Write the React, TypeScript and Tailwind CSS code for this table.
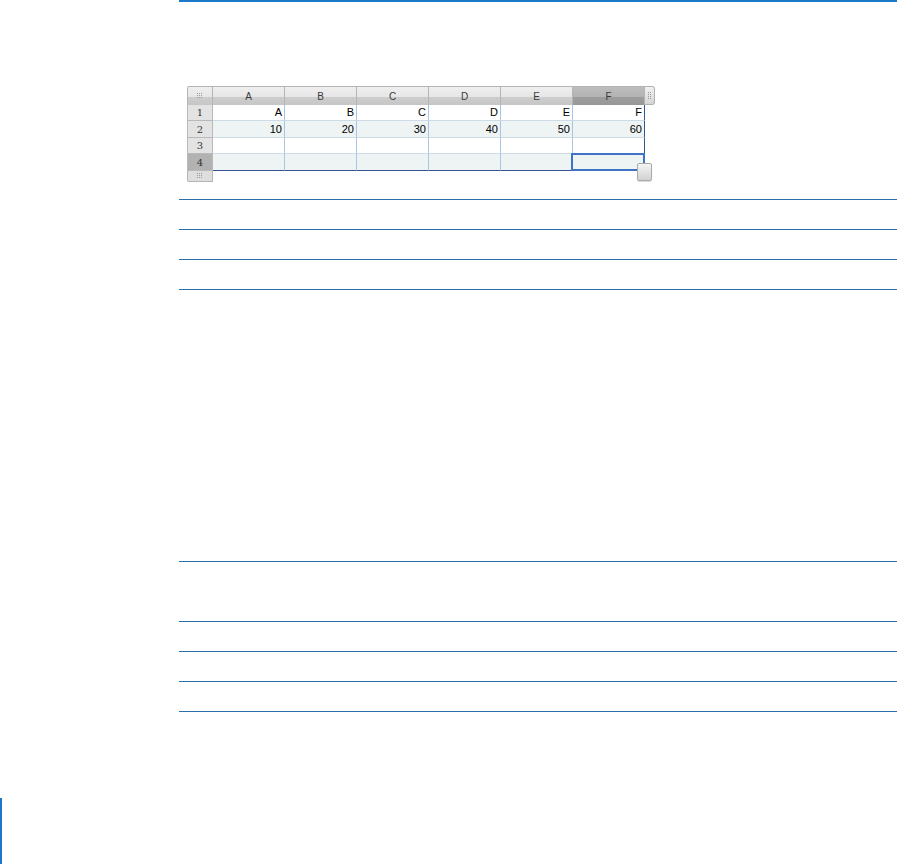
import React from "react";

const COLS = ["A", "B", "C", "D", "E", "F"];
const ROWS: { n: number; h: string; values: string[] }[] = [
  { n: 1, h: "h-[16px]", values: ["A", "B", "C", "D", "E", "F"] },
  { n: 2, h: "h-[17px]", values: ["10", "20", "30", "40", "50", "60"] },
  { n: 3, h: "h-[16px]", values: ["", "", "", "", "", ""] },
  { n: 4, h: "h-[17px]", values: ["", "", "", "", "", ""] },
];

function Grip({ vertical = false }: { vertical?: boolean }) {
  // tiny dotted grab handle
  const dots = [];
  const cols = vertical ? 2 : 3;
  const rows = vertical ? 4 : 3;
  for (let r = 0; r < rows; r++)
    for (let c = 0; c < cols; c++)
      dots.push(<rect key={`${r}-${c}`} x={c * 2} y={r * 2} width="1" height="1" fill="#9a9a9a" />);
  return (
    <svg width={cols * 2} height={rows * 2} viewBox={`0 0 ${cols * 2} ${rows * 2}`}>
      {dots}
    </svg>
  );
}

function Table() {
  return (
    <div className="relative w-[468px] font-['Liberation_Sans',Arial,sans-serif]">
      <div className="grid grid-cols-[26px_repeat(6,72px)_10px]">
        {/* header row */}
        <div className="h-[19px] flex items-center justify-center rounded-tl-[2px] border-l border-t border-r border-[#b5b5b5] bg-[linear-gradient(to_bottom,#efefef_0%,#e6e6e6_55%,#cdcdcd_58%,#c6c6c6_100%)]">
          <Grip />
        </div>
        {COLS.map((c) => (
          <div
            key={c}
            className={`h-[19px] flex items-center justify-center border-t border-r border-[#b5b5b5] text-[10px] text-[#3a3a3a] ${
              c === "F"
                ? "bg-[linear-gradient(to_bottom,#bdbdbd_0%,#b3b3b3_55%,#9d9d9d_58%,#979797_100%)]"
                : "bg-[linear-gradient(to_bottom,#efefef_0%,#e6e6e6_55%,#cdcdcd_58%,#c6c6c6_100%)]"
            }`}
          >
            {c}
          </div>
        ))}
        <div className="h-[19px] flex items-center justify-center rounded-r-[3px] border border-l-0 border-[#b0b0b0] bg-[linear-gradient(to_bottom,#f2f2f2,#d6d6d6)]">
          <Grip vertical />
        </div>

        {ROWS.map((row, ri) => (
          <React.Fragment key={row.n}>
            <div
              className={`${row.h} flex items-center justify-center border-l border-r border-b border-[#b9b9b9] text-[10px] text-[#333] font-['DejaVu_Serif',serif] ${
                row.n === 4 ? "bg-[#b2b2b2]" : "bg-[#e3e3e3]"
              }`}
            >
              {row.n}
            </div>
            {row.values.map((v, ci) => {
              const lastCol = ci === 5;
              const lastRow = ri === ROWS.length - 1;
              return (
                <div
                  key={ci}
                  className={`${row.h} relative flex items-center justify-end pr-[2px] text-[11px] text-black ${
                    row.n % 2 === 0 ? "bg-[#eef3f4]" : "bg-white"
                  } ${lastCol ? "border-r border-r-[#34558f]" : "border-r border-r-[#a9c5e2]"} ${
                    lastRow ? "border-b border-b-[#34558f]" : "border-b border-b-[#cddbe6]"
                  }`}
                >
                  {v}
                  {row.n === 4 && lastCol && (
                    <div className="absolute -left-[2px] -top-[1px] -right-[1px] -bottom-[1px] border-2 border-[#3f73c6]" />
                  )}
                </div>
              );
            })}
            <div />
          </React.Fragment>
        ))}

        {/* bottom strip */}
        <div className="h-[11px] flex items-center justify-center rounded-bl-[2px] border-l border-r border-b border-[#b5b5b5] bg-[#dedede]">
          <Grip />
        </div>
      </div>
      {/* resize handle */}
      <div className="absolute left-[450px] top-[77px] w-[15px] h-[18px] rounded-[2px] border border-[#a9a9a9] bg-[linear-gradient(to_bottom,#f4f4f4,#d2d2d2)] shadow-[0_1px_1px_rgba(0,0,0,0.15)]" />
    </div>
  );
}

export default function App() {
  const rule = "border-t border-[#2c6dad]";
  return (
    <div className="w-[897px] h-[864px] bg-white flex flex-col overflow-hidden">
      <div className="ml-[179px] h-[2px] bg-[#1a79c9]" />
      <div className="pl-[187px] pt-[84px]">
        <Table />
      </div>
      <div className="ml-[179px] mt-[17px]">
        <div className={`h-[30px] ${rule}`} />
        <div className={`h-[30px] ${rule}`} />
        <div className={`h-[30px] ${rule}`} />
        <div className={`h-[272px] ${rule}`} />
        <div className={`h-[60px] ${rule}`} />
        <div className={`h-[30px] ${rule}`} />
        <div className={`h-[30px] ${rule}`} />
        <div className={`h-[30px] ${rule}`} />
        <div className={rule} />
      </div>
      <div className="mt-[86px] w-[2px] h-[66px] bg-[#1a79c9]" />
    </div>
  );
}
